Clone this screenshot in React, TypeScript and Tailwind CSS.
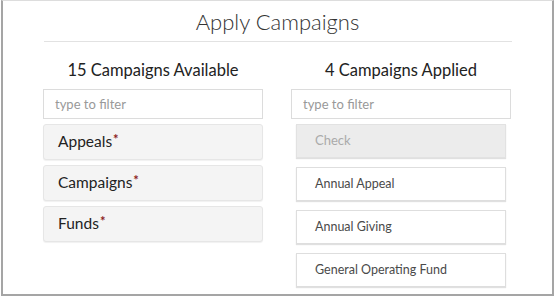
const available = ["Appeals", "Campaigns", "Funds"];
const applied = ["Annual Appeal", "Annual Giving", "General Operating Fund"];

export default function App() {
  return (
    <div className="h-[297px] w-[555px] bg-white font-['Lato',sans-serif] text-[#333]">
      <div className="ml-px h-[296px] w-[553px] border-x-2 border-b-2 border-t border-x-[#a5a5a5] border-b-[#a5a5a5] border-t-[#dddddd]">
        <div className="mx-auto w-[468px] pt-[7px]">
          <h1 className="text-center text-[22px] font-light leading-[28px] text-[#333]">Apply Campaigns</h1>
          <div className="mt-[5px] h-px bg-[#e2e2e2]" />
        </div>

        <div className="ml-[40px] mt-[16px] flex gap-[28px]">
          <section className="w-[220px]">
            <h2 className="text-center text-[16.5px] leading-[24px] text-[#222]">15 Campaigns Available</h2>
            <input
              placeholder="type to filter"
              className="mt-[7px] h-[30px] w-full border border-[#dcdcdc] px-[11px] text-[13px] text-[#333] outline-none placeholder:text-[#999]"
            />
            <ul className="mt-[5px] flex flex-col gap-[5px]">
              {available.map((name) => (
                <li
                  key={name}
                  className="flex h-[36px] items-center rounded-[3px] border border-[#e6e6e6] bg-[#f4f4f4] pl-[14px] text-[15.5px] text-[#222] shadow-[0_1px_1px_rgba(0,0,0,0.06)]"
                >
                  {name}
                  <span className="mb-[5px] ml-px text-[13px] font-bold leading-none text-[#8b1c1c]">*</span>
                </li>
              ))}
            </ul>
          </section>

          <section className="w-[220px]">
            <h2 className="text-center text-[16.5px] leading-[24px] text-[#222]">4 Campaigns Applied</h2>
            <input
              placeholder="type to filter"
              className="mt-[7px] h-[30px] w-full border border-[#dcdcdc] px-[11px] text-[13px] text-[#333] outline-none placeholder:text-[#999]"
            />
            <ul className="mt-[5px] flex flex-col gap-[9px] px-[5px]">
              <li className="flex h-[34px] items-center border border-[#e2e2e2] bg-[#ececec] pl-[18px] text-[13px] text-[#aaa] shadow-[0_1px_1px_rgba(0,0,0,0.12)]">
                Check
              </li>
              {applied.map((name) => (
                <li
                  key={name}
                  className="flex h-[34px] items-center border border-[#dedede] bg-white pl-[18px] text-[12.5px] text-[#4a4a4a] shadow-[0_1px_1px_rgba(0,0,0,0.12)]"
                >
                  {name}
                </li>
              ))}
            </ul>
          </section>
        </div>
      </div>
    </div>
  );
}
